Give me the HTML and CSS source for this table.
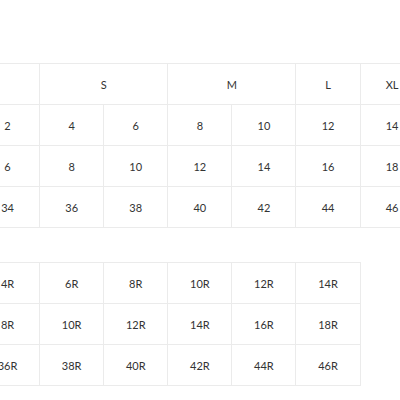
FILE: index.html
```html
<!DOCTYPE html>
<html>
<head>
<meta charset="utf-8">
<link rel="stylesheet" href="styles.css">
</head>
<body>
<div class="wrap">
  <table class="size-table t1">
    <colgroup><col><col><col><col><col><col><col></colgroup>
    <tr>
      <td></td>
      <td colspan="2">S</td>
      <td colspan="2">M</td>
      <td>L</td>
      <td>XL</td>
    </tr>
    <tr><td>2</td><td>4</td><td>6</td><td>8</td><td>10</td><td>12</td><td>14</td></tr>
    <tr><td>6</td><td>8</td><td>10</td><td>12</td><td>14</td><td>16</td><td>18</td></tr>
    <tr><td>34</td><td>36</td><td>38</td><td>40</td><td>42</td><td>44</td><td>46</td></tr>
  </table>
  <table class="size-table t2">
    <colgroup><col><col><col><col><col><col></colgroup>
    <tr><td>4R</td><td>6R</td><td>8R</td><td>10R</td><td>12R</td><td>14R</td></tr>
    <tr><td>8R</td><td>10R</td><td>12R</td><td>14R</td><td>16R</td><td>18R</td></tr>
    <tr><td>36R</td><td>38R</td><td>40R</td><td>42R</td><td>44R</td><td>46R</td></tr>
  </table>
</div>
</body>
</html>
```
FILE: styles.css
```css
html, body {
  margin: 0;
  padding: 0;
  background: #fff;
  overflow: hidden;
}
.wrap {
  padding-top: 63px;
  margin-left: -25px;
  display: flex;
  flex-direction: column;
  align-items: flex-start;
  gap: 34px;
  font-family: "Lato", "Open Sans", sans-serif;
  font-size: 11px;
  color: #333;
}
.size-table {
  border-collapse: collapse;
  table-layout: fixed;
}
.t1 { width: 449px; }
.t2 { width: 385px; }
.size-table col { width: 64.1px; }
.size-table td {
  border: 1px solid #ebebeb;
  height: 40px;
  padding: 0;
  text-align: center;
  vertical-align: middle;
}
```
